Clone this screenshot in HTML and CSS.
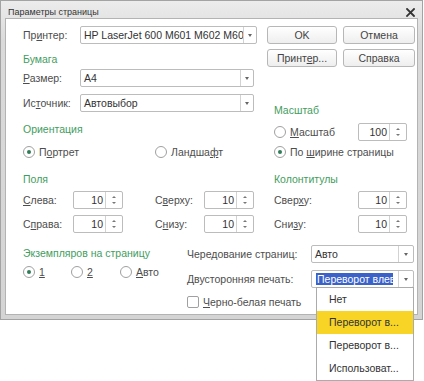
FILE: index.html
```html
<!DOCTYPE html>
<html lang="ru">
<head>
<meta charset="utf-8">
<title>Параметры страницы</title>
<link rel="stylesheet" href="styles.css">
</head>
<body>
<div class="window">
  <div class="titlebar">
    <span class="title">Параметры страницы</span>
    <svg class="close" width="9" height="9" viewBox="0 0 9 9"><path d="M1 1L8 8M8 1L1 8" stroke="#333" stroke-width="1.8" stroke-linecap="square"/></svg>
  </div>
  <div class="client">
    <div class="sec1">
      <div class="left1">
        <div class="row">
          <span class="lbl w57">Пр<u>и</u>нтер:</span>
          <div class="combo w177"><span class="val">HP LaserJet 600 M601 M602 M603</span><span class="dd"><i class="tri"></i></span></div>
        </div>
        <div class="hdr mt8">Бумага</div>
        <div class="row mt3">
          <span class="lbl w57"><u>Р</u>азмер:</span>
          <div class="combo w174"><span class="val">A4</span><span class="dd"><i class="tri"></i></span></div>
        </div>
        <div class="row mt7">
          <span class="lbl w57">Ис<u>т</u>очник:</span>
          <div class="combo w174"><span class="val">Автовыбор</span><span class="dd"><i class="tri"></i></span></div>
        </div>
        <div class="hdr mt10">Ориентация</div>
        <div class="row mt7">
          <span class="ropt w132"><span class="radio on"></span><span>П<u>о</u>ртрет</span></span>
          <span class="ropt"><span class="radio"></span><span>Ландша<u>ф</u>т</span></span>
        </div>
      </div>
      <div class="right1">
        <div class="btns">
          <div class="btn">OK</div>
          <div class="btn">Отмена</div>
          <div class="btn">Принт<u>е</u>р...</div>
          <div class="btn">Справка</div>
        </div>
        <div class="hdr mt36 ml7">Масштаб</div>
        <div class="row mt6 ml7">
          <span class="ropt w84"><span class="radio"></span><span><u>М</u>асштаб</span></span>
          <div class="spin w49"><span class="num">100</span><span class="arrows"><i class="up"></i><i class="dn"></i></span></div>
        </div>
        <div class="row mt2 ml7">
          <span class="ropt"><span class="radio on"></span><span>По <u>ш</u>ирине страницы</span></span>
        </div>
      </div>
    </div>

    <div class="sec2">
      <div class="fields">
        <div class="hdr">Поля</div>
        <div class="row mt5">
          <span class="lbl w50"><u>С</u>лева:</span>
          <div class="spin w50"><span class="num">10</span><span class="arrows"><i class="up"></i><i class="dn"></i></span></div>
          <span class="lbl w49 ml32">С<u>в</u>ерху:</span>
          <div class="spin w50"><span class="num">10</span><span class="arrows"><i class="up"></i><i class="dn"></i></span></div>
        </div>
        <div class="row mt6">
          <span class="lbl w50">С<u>п</u>рава:</span>
          <div class="spin w50"><span class="num">10</span><span class="arrows"><i class="up"></i><i class="dn"></i></span></div>
          <span class="lbl w49 ml32">С<u>н</u>изу:</span>
          <div class="spin w50"><span class="num">10</span><span class="arrows"><i class="up"></i><i class="dn"></i></span></div>
        </div>
      </div>
      <div class="footers">
        <div class="hdr">Колонтитулы</div>
        <div class="row mt5">
          <span class="lbl w84">Свер<u>х</u>у:</span>
          <div class="spin w49"><span class="num">10</span><span class="arrows"><i class="up"></i><i class="dn"></i></span></div>
        </div>
        <div class="row mt6">
          <span class="lbl w84">Сни<u>з</u>у:</span>
          <div class="spin w49"><span class="num">10</span><span class="arrows"><i class="up"></i><i class="dn"></i></span></div>
        </div>
      </div>
    </div>

    <div class="sec3">
      <div class="copies">
        <div class="hdr mt13">Экземпляров на страницу</div>
        <div class="row mt3">
          <span class="ropt w48"><span class="radio on"></span><span><u>1</u></span></span>
          <span class="ropt w49"><span class="radio"></span><span><u>2</u></span></span>
          <span class="ropt"><span class="radio"></span><span><u>А</u>вто</span></span>
        </div>
      </div>
      <div class="duplex">
        <div class="row mt12">
          <span class="lbl w124">Чередование страниц:</span>
          <div class="combo w103 wide"><span class="val">Авто</span><span class="dd"><i class="tri"></i></span></div>
        </div>
        <div class="row mt7">
          <span class="lbl w124">Двусторонняя печать:</span>
          <div class="combo w103 wide open">
            <span class="val"><span class="sel">Переворот влево</span></span><span class="dd"><i class="tri"></i></span>
            <ul class="list">
              <li>Нет</li>
              <li class="hot">Переворот в...</li>
              <li>Переворот в...</li>
              <li>Использоват...</li>
            </ul>
          </div>
        </div>
        <div class="row mt5">
          <span class="ropt"><span class="check"></span><span><u>Ч</u>ерно-белая печать</span></span>
        </div>
      </div>
    </div>
  </div>
</div>
</body>
</html>
```

FILE: styles.css
```css
* { box-sizing: border-box; }
html { height: 100%; }
body {
  margin: 0;
  min-height: 381px;
  height: 100%;
  background: #fff;
  font-family: "Liberation Sans", Arial, sans-serif;
  font-size: 10.5px;
  color: #4d4d4d;
}
u { text-decoration: underline; text-underline-offset: 1px; }

.window {
  width: 423px;
  height: 320px;
  border: 1px solid #a3a3a3;
  background: linear-gradient(#ececec, #dadada 40px, #d4d4d4);
  display: flex;
  flex-direction: column;
}
.titlebar {
  height: 17px;
  padding: 6px 7px 0 7px;
  display: flex;
  justify-content: space-between;
  align-items: center;
  font-size: 9px;
  line-height: 11px;
  color: #333;
}
.close { margin-top: -1px; }
.client {
  flex: 1;
  margin: 0 4px 4px 4px;
  background: #fff;
  border: 1px solid #b3b3b3;
  padding: 7px 0 0 17px;
}

.row { display: flex; align-items: center; height: 18px; }
.hdr { color: #3f9d60; height: 14px; line-height: 14px; white-space: nowrap; }
.lbl { white-space: nowrap; flex: none; }

.mt2 { margin-top: 2px; } .mt3 { margin-top: 3px; } .mt5 { margin-top: 5px; }
.mt6 { margin-top: 6px; } .mt7 { margin-top: 7px; } .mt8 { margin-top: 8px; }
.mt10 { margin-top: 10px; } .mt12 { margin-top: 12px; } .mt13 { margin-top: 13px; }
.mt36 { margin-top: 36px; }
.ml7 { margin-left: 7px; } .ml32 { margin-left: 32px; }

.w48 { width: 48px; } .w49 { width: 49px; } .w50 { width: 50px; } .w57 { width: 57px; }
.w84 { width: 84px; } .w103 { width: 103px; } .w124 { width: 124px; } .w132 { width: 132px; }
.w174 { width: 174px; } .w177 { width: 177px; }

.sec1 { display: flex; }
.left1 { width: 244px; flex: none; }
.right1 { width: 150px; flex: none; }

.btns {
  display: grid;
  grid-template-columns: 70px 72px;
  grid-auto-rows: 18px;
  column-gap: 6px;
  row-gap: 5px;
}
.btn {
  border: 1px solid #b7b7b7;
  border-radius: 3px;
  background: linear-gradient(#ffffff, #eeeeee);
  text-align: center;
  line-height: 16px;
  color: #444;
  white-space: nowrap;
}

.combo {
  position: relative;
  display: flex;
  height: 18px;
  flex: none;
  border: 1px solid #bcbcbc;
  border-radius: 2px;
  background: #fff;
}
.val {
  flex: 1;
  min-width: 0;
  overflow: hidden;
  white-space: nowrap;
  padding-left: 3px;
  line-height: 16px;
  color: #333;
}
.dd {
  width: 13px;
  flex: none;
  border-left: 1px solid #d2d2d2;
  display: flex;
  align-items: center;
  justify-content: center;
}
.wide .dd { width: 15px; }
.tri {
  width: 0; height: 0;
  border-left: 2.5px solid transparent;
  border-right: 2.5px solid transparent;
  border-top: 3px solid #666;
}
.open .val {
  flex: none;
  width: 81px;
  margin-right: 5px;
  padding: 1px 0 1px 4px;
  line-height: 14px;
}
.sel { background: #3a62c9; color: #fff; padding: 0 1px; }

.list {
  position: absolute;
  top: 100%;
  left: 4px;
  right: -1px;
  margin: 0;
  padding: 0;
  list-style: none;
  background: #fff;
  border: 1px solid #ababab;
  z-index: 2;
}
.list li {
  height: 23px;
  line-height: 23px;
  padding-left: 12px;
  color: #333;
  white-space: nowrap;
}
.list li.hot { background: #f7d425; }

.spin {
  display: flex;
  height: 18px;
  flex: none;
  border: 1px solid #bcbcbc;
  border-radius: 2px;
  background: #fff;
}
.num {
  flex: 1;
  text-align: right;
  padding-right: 2px;
  line-height: 16px;
  color: #333;
}
.arrows {
  width: 17px;
  flex: none;
  border-left: 1px solid #d2d2d2;
  display: flex;
  flex-direction: column;
  align-items: center;
  justify-content: center;
  gap: 4px;
}
.up, .dn {
  width: 0; height: 0;
  border-left: 2px solid transparent;
  border-right: 2px solid transparent;
}
.up { border-bottom: 2px solid #777; }
.dn { border-top: 2px solid #777; }

.ropt { display: flex; align-items: center; white-space: nowrap; flex: none; }
.radio {
  width: 12px; height: 12px;
  border: 1px solid #a0a0a0;
  border-radius: 50%;
  background: #fff;
  margin-right: 4px;
  display: flex;
  align-items: center;
  justify-content: center;
  flex: none;
}
.radio.on::after {
  content: "";
  width: 4px; height: 4px;
  border-radius: 50%;
  background: #2f7d58;
}
.check {
  width: 12px; height: 12px;
  border: 1px solid #a0a0a0;
  border-radius: 2px;
  background: #fff;
  margin-right: 4px;
  flex: none;
}

.sec2 { display: flex; margin-top: 11px; }
.fields { width: 251px; flex: none; }
.footers { flex: none; }

.sec3 { display: flex; }
.copies { width: 164px; flex: none; }
.duplex { flex: none; }
```
